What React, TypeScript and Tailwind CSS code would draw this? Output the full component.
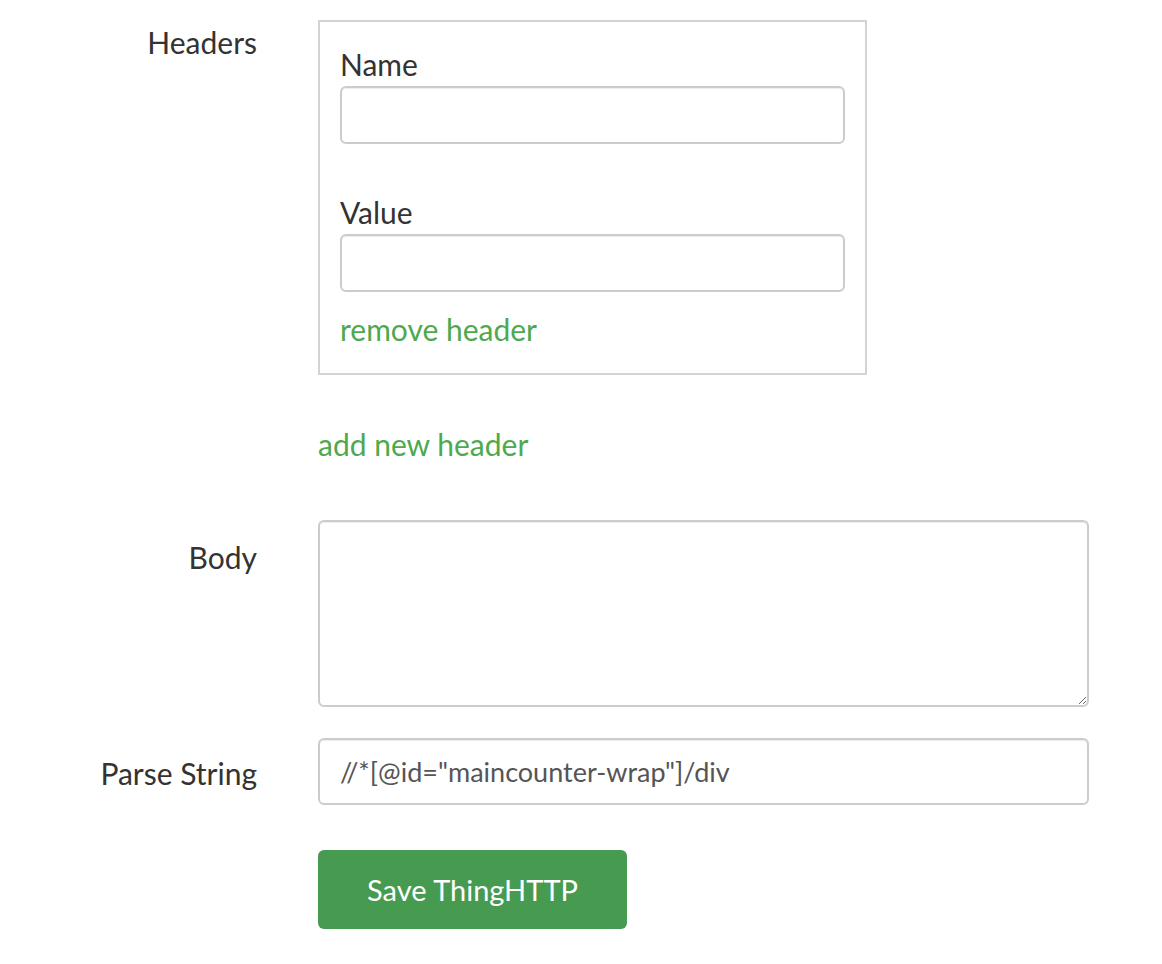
import { useState } from 'react'

type Header = {
  name: string
  value: string
}

const labelClass =
  'w-[257px] shrink-0 text-right text-[30px] leading-[40px] text-[#333]'
const inputClass =
  'block w-full rounded-[6px] border-2 border-[#cccccc] bg-white px-[20px] text-[27px] text-[#555] shadow-[inset_0_1px_1px_rgba(0,0,0,0.075)] outline-none'

export default function App() {
  const [headers, setHeaders] = useState<Header[]>([{ name: '', value: '' }])
  const [body, setBody] = useState('')
  const [parseString, setParseString] = useState(
    '//*[@id="maincounter-wrap"]/div'
  )

  function updateHeader(index: number, key: keyof Header, value: string) {
    setHeaders((prev) =>
      prev.map((h, i) => (i === index ? { ...h, [key]: value } : h))
    )
  }

  return (
    <main className="h-[964px] w-[1162px] bg-white pt-[20px] font-['Lato',sans-serif] text-[#333]">
      {/* headers */}
      <div className="flex">
        <label className={`${labelClass} pt-[2px]`}>Headers</label>
        <div className="ml-[61px]">
          {headers.map((header, index) => (
            <div
              key={index}
              className="w-[549px] border-2 border-[#d3d3d3] px-[20px] pt-[22px] pb-[24px]"
            >
              <label className="block text-[30px] leading-[40px] text-[#333]">
                Name
              </label>
              <input
                className={`${inputClass} mt-[2px] h-[58px]`}
                value={header.name}
                onChange={(e) => updateHeader(index, 'name', e.target.value)}
              />

              <label className="mt-[48px] block text-[30px] leading-[40px] text-[#333]">
                Value
              </label>
              <input
                className={`${inputClass} mt-[2px] h-[58px]`}
                value={header.value}
                onChange={(e) => updateHeader(index, 'value', e.target.value)}
              />

              <a
                className="mt-[17px] block cursor-pointer text-[30px] leading-[40px] text-[#4ea94e]"
                onClick={() =>
                  setHeaders((prev) => prev.filter((_, i) => i !== index))
                }
              >
                remove header
              </a>
            </div>
          ))}

          <a
            className="mt-[49px] block cursor-pointer text-[30px] leading-[40px] text-[#4ea94e]"
            onClick={() => setHeaders((prev) => [...prev, { name: '', value: '' }])}
          >
            add new header
          </a>
        </div>
      </div>

      {/* body */}
      <div className="mt-[56px] flex">
        <label className={`${labelClass} pt-[17px]`}>Body</label>
        <div className="ml-[61px] w-[771px]">
          <textarea
            className={`${inputClass} h-[187px] py-[12px]`}
            value={body}
            onChange={(e) => setBody(e.target.value)}
          />
        </div>
      </div>

      {/* parse string */}
      <div className="mt-[31px] flex">
        <label className={`${labelClass} pt-[15px]`}>Parse String</label>
        <div className="ml-[61px] w-[771px]">
          <input
            className={`${inputClass} h-[67px]`}
            value={parseString}
            onChange={(e) => setParseString(e.target.value)}
          />
        </div>
      </div>

      <div className="mt-[45px] flex">
        <div className="w-[257px] shrink-0" />
        <button className="ml-[61px] h-[79px] w-[309px] rounded-[6px] bg-[#469b50] text-[29px] text-white">
          Save ThingHTTP
        </button>
      </div>
    </main>
  )
}
